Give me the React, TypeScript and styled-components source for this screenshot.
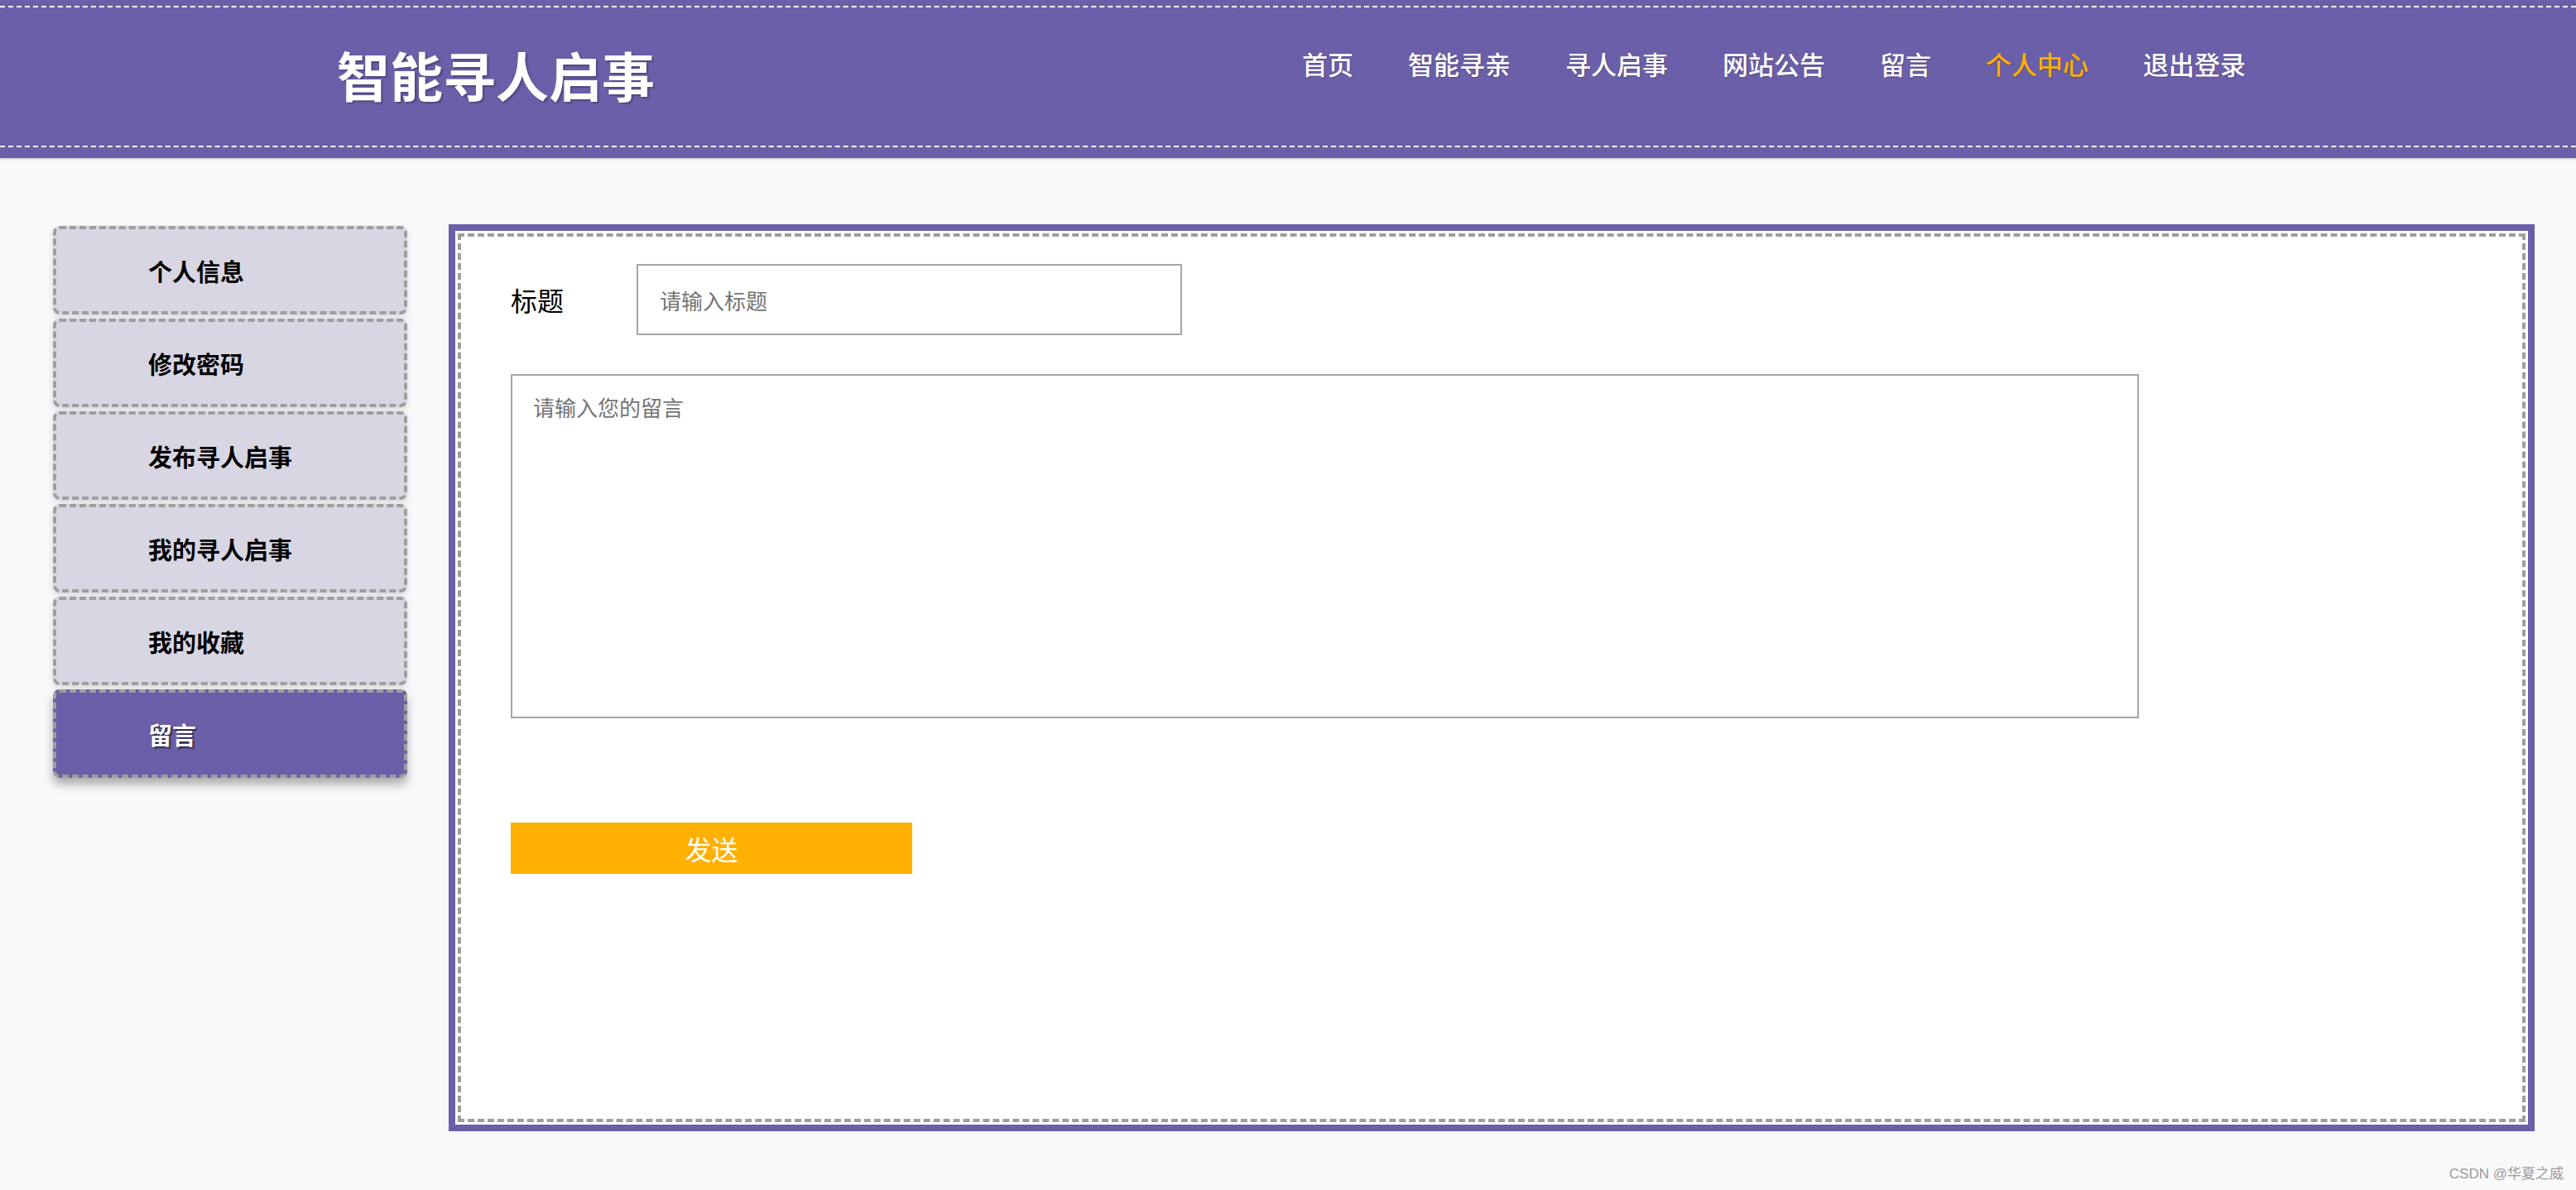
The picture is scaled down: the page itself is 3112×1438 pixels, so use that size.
import React from "react"
import styled, { createGlobalStyle } from "styled-components"

const purple = "#6a5fa8"
const orange = "#ffb000"
const dashGray = "#9e9e9e"

const GlobalStyle = createGlobalStyle`
  body {
    margin: 0;
    background: #f8f9fb;
    font-family: "Noto Sans CJK SC", "Noto Sans", sans-serif;
  }
  * { box-sizing: border-box; }
`

const HeaderBar = styled.header`
  background: ${purple};
  padding: 7px 0 13px;
  box-shadow: 0 2px 2px rgba(0, 0, 0, 0.15);
`

const HeaderInner = styled.div`
  height: 171px;
  border-top: 2px dashed #fff;
  border-bottom: 2px dashed #fff;
  display: flex;
  align-items: center;
  justify-content: space-between;
  padding: 0 399px 0 407px;
`

const SiteTitle = styled.h1`
  margin: 0 0 7px;
  font-size: 64px;
  line-height: 1;
  font-weight: 700;
  color: #fff;
  text-shadow: 2px 2px 2px rgba(0, 0, 0, 0.25);
`

const Nav = styled.nav`
  align-self: flex-start;
  margin-top: 52px;
  display: flex;
  gap: 66px;
`

const NavLink = styled.a<{ $active?: boolean }>`
  font-size: 31px;
  line-height: 31px;
  font-weight: 500;
  color: ${(p) => (p.$active ? orange : "#fff")};
  text-decoration: none;
  text-shadow: 1px 1px 1px rgba(0, 0, 0, 0.2);
  cursor: pointer;
`

const Main = styled.main`
  display: flex;
  gap: 50px;
  padding: 80px 50px 0 64px;
`

const Sidebar = styled.aside`
  width: 428px;
  flex-shrink: 0;
  margin-top: 2px;
  display: flex;
  flex-direction: column;
  gap: 5px;
`

const SideItem = styled.div<{ $active?: boolean }>`
  height: 107px;
  display: flex;
  align-items: center;
  padding-left: 111px;
  border: 4px dashed ${dashGray};
  border-radius: 8px;
  background: ${(p) => (p.$active ? purple : "#d8d6e3")};
  color: ${(p) => (p.$active ? "#fff" : "#000")};
  font-size: 29px;
  font-weight: 700;
  text-shadow: ${(p) => (p.$active ? "2px 2px 2px rgba(0,0,0,0.6)" : "none")};
  box-shadow: ${(p) =>
    p.$active ? "0 8px 12px rgba(0,0,0,0.3)" : "0 4px 8px rgba(0,0,0,0.12)"};
  cursor: pointer;
`

const Panel = styled.section`
  flex: 1;
  height: 1096px;
  background: #fff;
  border: 8px solid ${purple};
  padding: 3px;
`

const PanelInner = styled.div`
  height: 100%;
  border: 4px dashed ${dashGray};
  padding: 33px 60px;
`

const TitleRow = styled.div`
  display: flex;
  align-items: center;
`

const Label = styled.label`
  width: 152px;
  font-size: 32px;
  color: #000;
`

const TextInput = styled.input`
  width: 659px;
  height: 86px;
  border: 2px solid #a6a6a6;
  padding: 0 26px;
  font-size: 26px;
  font-family: inherit;
  outline: none;
  &::placeholder { color: #757575; }
`

const MessageArea = styled.textarea`
  display: block;
  margin-top: 47px;
  width: 1967px;
  height: 416px;
  border: 2px solid #a6a6a6;
  padding: 19px 25px;
  font-size: 26px;
  font-family: inherit;
  resize: none;
  outline: none;
  &::placeholder { color: #757575; }
`

const SendButton = styled.button`
  display: block;
  margin-top: 126px;
  width: 485px;
  height: 62px;
  border: none;
  background: ${orange};
  color: #fff;
  font-size: 32px;
  font-family: inherit;
  cursor: pointer;
`

const Footer = styled.div`
  margin-top: 42px;
  padding-right: 15px;
  text-align: right;
  font-family: "Liberation Sans", "Noto Sans CJK SC", sans-serif;
  font-size: 17px;
  line-height: 20px;
  color: #9a9a9a;
`

const navItems = ["首页", "智能寻亲", "寻人启事", "网站公告", "留言", "个人中心", "退出登录"]
const sideItems = ["个人信息", "修改密码", "发布寻人启事", "我的寻人启事", "我的收藏", "留言"]

const App = () => {
  return (
    <>
      <GlobalStyle />
      <HeaderBar>
        <HeaderInner>
          <SiteTitle>智能寻人启事</SiteTitle>
          <Nav>
            {navItems.map((n) => (
              <NavLink key={n} $active={n === "个人中心"}>
                {n}
              </NavLink>
            ))}
          </Nav>
        </HeaderInner>
      </HeaderBar>

      <Main>
        <Sidebar>
          {sideItems.map((s, i) => (
            <SideItem key={s + i} $active={i === sideItems.length - 1}>
              {s}
            </SideItem>
          ))}
        </Sidebar>

        <Panel>
          <PanelInner>
            <TitleRow>
              <Label>标题</Label>
              <TextInput placeholder="请输入标题" />
            </TitleRow>
            <MessageArea placeholder="请输入您的留言" />
            <SendButton>发送</SendButton>
          </PanelInner>
        </Panel>
      </Main>

      <Footer>CSDN @华夏之威</Footer>
    </>
  )
}

export default App
